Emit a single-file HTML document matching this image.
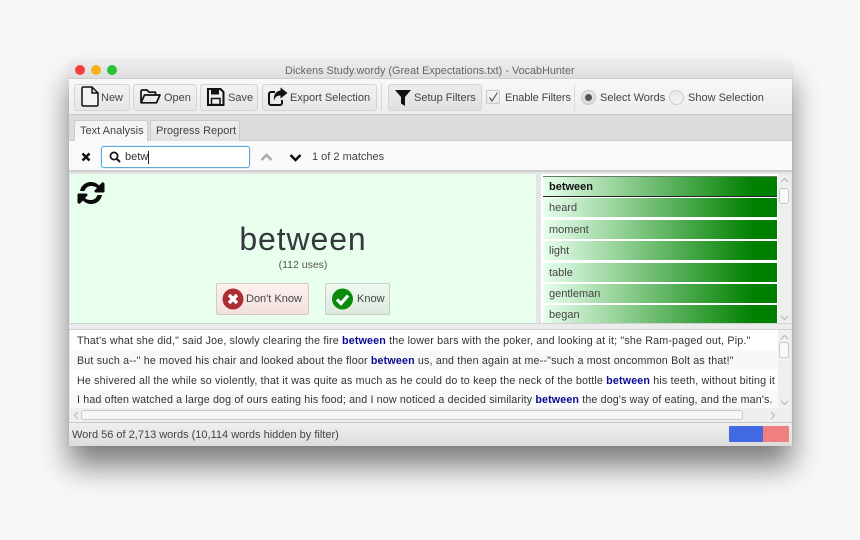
<!DOCTYPE html>
<html><head><meta charset="utf-8">
<style>
html,body{margin:0;padding:0;width:860px;height:540px;overflow:hidden;background:#f8f8f8;font-family:"Liberation Sans",sans-serif;color:#333}
#w{position:absolute;left:0;top:0;width:860px;height:540px;background:#f8f8f8;overflow:hidden;filter:blur(.35px)}
.a{position:absolute;box-sizing:border-box}
.t{position:absolute;white-space:nowrap;font-size:11px;line-height:14px;letter-spacing:0;color:#444}
.btn{position:absolute;box-sizing:border-box;top:84px;height:27px;border:1px solid #d4d4d4;border-radius:3px;background:linear-gradient(#f2f2f2,#e6e6e6)}
.row{position:absolute;left:543px;width:234px;height:19.4px;background:linear-gradient(90deg,#e8ffee 0%,#008000 90%,#008000 100%);font-size:11px;line-height:20px;padding-left:6px;box-sizing:border-box;color:#444}
.s{position:absolute;left:77px;white-space:nowrap;font-size:10.7px;line-height:14px;letter-spacing:.17px;color:#333}
.s b{color:#0a0a96}
svg{position:absolute;overflow:visible}
</style></head><body><div id="w">
<div class="a" style="left:69px;top:61px;width:723px;height:385px;border-radius:5px 5px 0 0;background:#e8e8e8;box-shadow:0 20px 30px rgba(0,0,0,.5),0 0 1px rgba(0,0,0,.2)"></div>

<!-- title bar -->
<div class="a" style="left:69px;top:61px;width:723px;height:18px;border-radius:5px 5px 0 0;background:linear-gradient(#ececec,#dedede);border-bottom:1px solid #cccccc"></div>
<div class="a" style="left:75px;top:65px;width:10px;height:10px;border-radius:50%;background:#f5413c"></div>
<div class="a" style="left:91px;top:65px;width:10px;height:10px;border-radius:50%;background:#f8b01c"></div>
<div class="a" style="left:107px;top:65px;width:10px;height:10px;border-radius:50%;background:#28c337"></div>
<div class="t" style="left:285px;top:64px;color:#666;letter-spacing:.02px;font-size:10.8px">Dickens Study.wordy (Great Expectations.txt) - VocabHunter</div>

<!-- toolbar -->
<div class="a" style="left:69px;top:79px;width:723px;height:36px;background:linear-gradient(#f8f8f8,#ececec);border-bottom:1px solid #c8c8c8"></div>
<div class="btn" style="left:74px;width:56px"></div>
<svg style="left:81px;top:86px" width="18" height="21" viewBox="0 0 18 21"><path d="M2.500 1H11L17 7V18.500C17 19.300 16.500 20 15.500 20H2.500C1.500 20 1 19.300 1 18.500V2.500C1 1.500 1.500 1 2.500 1Z M11 1V7H17" fill="#f4f4f4" stroke="#111" stroke-width="1.500" stroke-linejoin="round"/></svg>
<div class="t" style="left:101px;top:91px">New</div>
<div class="btn" style="left:133px;width:64px"></div>
<svg style="left:140px;top:89px" width="21" height="15" viewBox="0 0 21 15"><path d="M1 13.500V2.500C1 1.500 1.500 1 2.500 1H7L9 3.200H15.500V6 M1 13.800L4.500 6H20L16.500 13.800Z" fill="none" stroke="#111" stroke-width="1.700" stroke-linejoin="round"/></svg>
<div class="t" style="left:164px;top:91px">Open</div>
<div class="btn" style="left:200px;width:58px"></div>
<svg style="left:207px;top:88px" width="18" height="18" viewBox="0 0 18 18"><path d="M1 1H13.500L16.500 4V17H1Z" fill="none" stroke="#111" stroke-width="2"/><path d="M4 1.500H12V6.500H4Z" fill="#111"/><path d="M4.500 10.500H13V16.500H4.500Z" fill="#f0f0f0" stroke="#111" stroke-width="1.500"/></svg>
<div class="t" style="left:228px;top:91px">Save</div>
<div class="btn" style="left:262px;width:115px"></div>
<svg style="left:268px;top:87px" width="20" height="19" viewBox="0 0 20 19"><path d="M7 5H3C1.800 5 1 5.800 1 7V16C1 17.200 1.800 18 3 18H12C13.200 18 14 17.200 14 16V13" fill="none" stroke="#111" stroke-width="2"/><path d="M12.500 0.500L19.500 6L12.500 11.500V8.500C9 8.500 6.800 10 6 14C5 8 8 4 12.500 3.500Z" fill="#111"/></svg>
<div class="t" style="left:290px;top:91px">Export Selection</div>
<div class="a" style="left:381px;top:84px;width:1px;height:27px;background:#d6d6d6"></div>
<div class="btn" style="left:388px;width:94px;background:linear-gradient(#ececec,#e0e0e0)"></div>
<svg style="left:395px;top:90px" width="16" height="16" viewBox="0 0 16 16"><path d="M0 0H16L10 7V16L6 13.500V7Z" fill="#111"/></svg>
<div class="t" style="left:414px;top:91px">Setup Filters</div>
<div class="a" style="left:486px;top:90px;width:14px;height:14px;border:1px solid #c8c8c8;border-radius:2px;background:linear-gradient(#f4f4f4,#e8e8e8)"></div>
<svg style="left:488px;top:92px" width="11" height="11" viewBox="0 0 11 11"><path d="M1.500 5.500L4 9L9.500 .5" fill="none" stroke="#555" stroke-width="1.100"/></svg>
<div class="t" style="left:505px;top:91px;letter-spacing:-.1px">Enable Filters</div>
<div class="a" style="left:574px;top:84px;width:1px;height:27px;background:#dcdcdc"></div>
<div class="a" style="left:581px;top:90px;width:15px;height:15px;border-radius:50%;border:1px solid #c8c8c8;background:linear-gradient(#e6e6e6,#d8d8d8)"></div>
<div class="a" style="left:585px;top:94px;width:7px;height:7px;border-radius:50%;background:#555"></div>
<div class="t" style="left:600px;top:91px">Select Words</div>
<div class="a" style="left:669px;top:90px;width:15px;height:15px;border-radius:50%;border:1px solid #cccccc;background:linear-gradient(#e8e8e8,#f4f4f4)"></div>
<div class="t" style="left:688px;top:91px">Show Selection</div>

<!-- tab area -->
<div class="a" style="left:69px;top:115px;width:723px;height:26px;background:#dcdcdc;border-bottom:1px solid #cfcfcf"></div>
<div class="a" style="left:74px;top:120px;width:74px;height:22px;background:linear-gradient(#f2f2f2,#fafafa);border:1px solid #cccccc;border-bottom:none;border-radius:2px 2px 0 0"></div>
<div class="t" style="left:80px;top:124px">Text Analysis</div>
<div class="a" style="left:150px;top:120px;width:90px;height:21px;background:linear-gradient(#ececec,#e2e2e2);border:1px solid #cccccc;border-bottom:none;border-radius:2px 2px 0 0"></div>
<div class="t" style="left:156px;top:124px">Progress Report</div>

<!-- search bar -->
<div class="a" style="left:69px;top:141px;width:723px;height:31px;background:#fafafa;border-bottom:2px solid #cdcdcd"></div>
<svg style="left:81px;top:152px" width="10" height="10" viewBox="0 0 10 10"><path d="M1.500 1.500L8.500 8.500M8.500 1.500L1.500 8.500" stroke="#111" stroke-width="2.600"/></svg>
<div class="a" style="left:101px;top:146px;width:149px;height:22px;background:#fff;border:1px solid #5aa9d6;border-radius:3px;box-shadow:0 0 1px #7cc0e6"></div>
<svg style="left:109px;top:151px" width="12" height="12" viewBox="0 0 12 12"><circle cx="5" cy="5" r="3.600" fill="none" stroke="#111" stroke-width="1.700"/><path d="M7.800 7.800L11 11" stroke="#111" stroke-width="2"/></svg>
<div class="t" style="left:125px;top:150px;color:#333">betw</div>
<div class="a" style="left:148px;top:151px;width:1px;height:13px;background:#222"></div>
<svg style="left:260px;top:153px" width="13" height="9" viewBox="0 0 13 9"><path d="M1.500 7L6.500 2L11.500 7" fill="none" stroke="#aaa" stroke-width="2.600"/></svg>
<svg style="left:289px;top:153px" width="13" height="9" viewBox="0 0 13 9"><path d="M1.500 2L6.500 7L11.500 2" fill="none" stroke="#111" stroke-width="2.600"/></svg>
<div class="t" style="left:312px;top:150px">1 of 2 matches</div>

<!-- main panes -->
<div class="a" style="left:69px;top:172px;width:723px;height:158px;background:#e4e4e4"></div>
<div class="a" style="left:70px;top:174px;width:466px;height:149px;background:#e8ffee"></div>
<svg style="left:77px;top:179px" width="28" height="28" viewBox="0 0 28 28"><path d="M3 12C4 6.500 8.500 3 14 3C17.500 3 20 4.500 22 6.500L25 3.500C26 3 27.500 3.500 27.500 5V12.500C27.500 13 27 13.500 26.500 13.500H19C17.500 13.500 17 12 18 11L20 9C18.500 7.500 16.500 7 14 7C11 7 8.500 9 7.500 12Z" fill="#0a0a0a"/><path d="M25 16C24 21.500 19.500 25 14 25C10.500 25 8 23.500 6 21.500L3 24.500C2 25 .500 24.500 .500 23V15.500C.500 15 1 14.500 1.500 14.500H9C10.500 14.500 11 16 10 17L8 19C9.500 20.500 11.500 21 14 21C17 21 19.500 19 20.500 16Z" fill="#0a0a0a"/></svg>
<div class="a" style="left:70px;top:221px;width:466px;text-align:center;font-size:32px;line-height:36px;letter-spacing:.9px;color:#37373f">between</div>
<div class="a" style="left:70px;top:258px;width:466px;text-align:center;font-size:10.500px;line-height:14px;color:#555">(112 uses)</div>

<div class="a" style="left:216px;top:283px;width:93px;height:32px;border:1px solid #d4c8c8;border-radius:2px;background:linear-gradient(#fdf0ee,#f2e0de)"></div>
<svg style="left:222px;top:288px" width="22" height="22" viewBox="0 0 22 22"><circle cx="11" cy="11" r="10.500" fill="#ac2e34"/><path d="M7 7L15 15M15 7L7 15" stroke="#fff" stroke-width="3.400"/></svg>
<div class="t" style="left:246px;top:292px">Don't Know</div>
<div class="a" style="left:325px;top:283px;width:65px;height:32px;border:1px solid #c8d0c8;border-radius:2px;background:linear-gradient(#eef8f0,#dceade)"></div>
<svg style="left:332px;top:288px" width="21" height="22" viewBox="0 0 21 22"><circle cx="10.500" cy="11" r="10.500" fill="#0a8a0a"/><path d="M5 11.500L9 15.500L16 7.500" fill="none" stroke="#fff" stroke-width="3.200"/></svg>
<div class="t" style="left:357px;top:292px">Know</div>

<!-- word list -->
<div class="a" style="left:541px;top:174px;width:237px;height:149px;background:#fff;overflow:hidden"></div>
<div class="row" style="top:176px;height:21px;font-weight:bold;color:#111;border-top:1px solid #6a7a6a;border-bottom:1px solid #222;line-height:21px">between</div>
<div class="row" style="top:198px">heard</div>
<div class="row" style="top:219.500px">moment</div>
<div class="row" style="top:241px">light</div>
<div class="row" style="top:262.500px">table</div>
<div class="row" style="top:284px">gentleman</div>
<div class="row" style="top:305px;height:18px">began</div>
<div class="a" style="left:778px;top:174px;width:13px;height:149px;background:#efefef"></div>
<svg style="left:780px;top:177px" width="9" height="6" viewBox="0 0 9 6"><path d="M1 5L4.500 1.500L8 5" fill="none" stroke="#b4b4b4"/></svg>
<div class="a" style="left:779px;top:188px;width:10px;height:16px;background:#fafafa;border:1px solid #c8c8c8;border-radius:3px"></div>
<svg style="left:780px;top:315px" width="9" height="6" viewBox="0 0 9 6"><path d="M1 1L4.500 4.500L8 1" fill="none" stroke="#b4b4b4"/></svg>

<!-- sentences -->
<div class="a" style="left:69px;top:323px;width:723px;height:7px;background:#ececec;border-top:1px solid #d0d0d0;border-bottom:1px solid #d0d0d0"></div>
<div class="a" style="left:70px;top:330px;width:708px;height:78px;background:#fff"></div>
<div class="a" style="left:70px;top:350px;width:708px;height:20px;background:#f8f8f8"></div>
<div class="a" style="left:70px;top:390px;width:708px;height:18px;background:#f8f8f8"></div>
<div class="s" style="top:334px">That's what she did," said Joe, slowly clearing the fire <b>between</b> the lower bars with the poker, and looking at it; "she Ram-paged out, Pip."</div>
<div class="s" style="top:354px">But such a--" he moved his chair and looked about the floor <b>between</b> us, and then again at me--"such a most oncommon Bolt as that!"</div>
<div class="a" style="left:70px;top:374px;width:707px;height:16px;overflow:hidden"><div class="s" style="left:7px;top:0">He shivered all the while so violently, that it was quite as much as he could do to keep the neck of the bottle <b>between</b> his teeth, without biting it off.</div></div>
<div class="s" style="top:393px;letter-spacing:.145px">I had often watched a large dog of ours eating his food; and I now noticed a decided similarity <b>between</b> the dog's way of eating, and the man's.</div>
<div class="a" style="left:778px;top:330px;width:13px;height:78px;background:#efefef"></div>
<svg style="left:780px;top:334px" width="9" height="6" viewBox="0 0 9 6"><path d="M1 5L4.500 1.500L8 5" fill="none" stroke="#b4b4b4"/></svg>
<div class="a" style="left:779px;top:342px;width:10px;height:16px;background:#fafafa;border:1px solid #c8c8c8;border-radius:3px"></div>
<svg style="left:780px;top:400px" width="9" height="6" viewBox="0 0 9 6"><path d="M1 1L4.500 4.500L8 1" fill="none" stroke="#b4b4b4"/></svg>
<!-- h scrollbar -->
<div class="a" style="left:70px;top:408px;width:721px;height:14px;background:#efefef"></div>
<svg style="left:73px;top:411px" width="6" height="9" viewBox="0 0 6 9"><path d="M5 1L1.500 4.500L5 8" fill="none" stroke="#b4b4b4"/></svg>
<div class="a" style="left:81px;top:410px;width:662px;height:10px;background:#f6f6f6;border:1px solid #c8c8c8;border-radius:3px"></div>
<svg style="left:770px;top:411px" width="6" height="9" viewBox="0 0 6 9"><path d="M1 1L4.500 4.500L1 8" fill="none" stroke="#b4b4b4"/></svg>

<!-- status bar -->
<div class="a" style="left:69px;top:422px;width:723px;height:24px;background:linear-gradient(#efefef,#dcdcdc);border-top:1px solid #cacaca"></div>
<div class="t" style="left:72px;top:428px">Word 56 of 2,713 words (10,114 words hidden by filter)</div>
<div class="a" style="left:729px;top:426px;width:34px;height:16px;background:#4169e1;border-radius:1px 0 0 1px"></div>
<div class="a" style="left:763px;top:426px;width:26px;height:16px;background:#f08080;border-radius:0 1px 1px 0"></div>
</div></body></html>
